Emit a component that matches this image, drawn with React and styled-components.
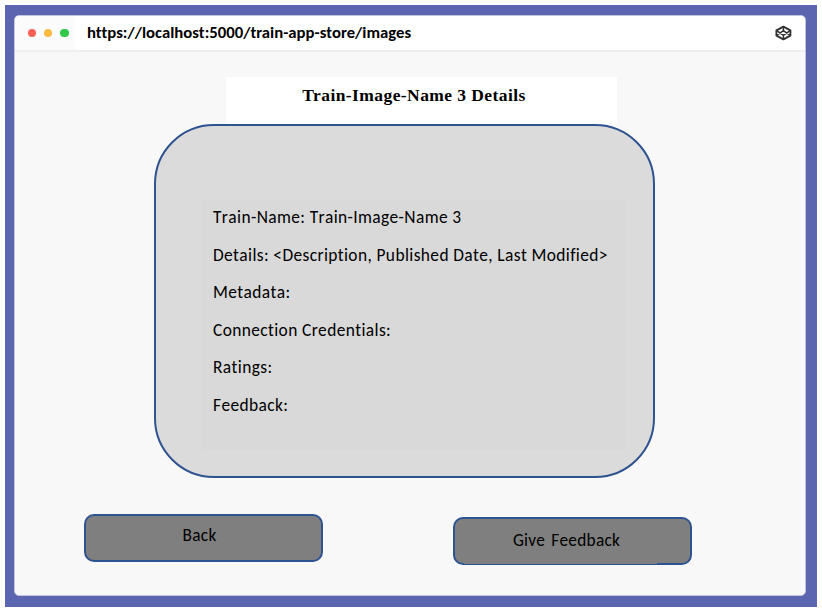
import React from 'react';
import styled, { createGlobalStyle } from 'styled-components';

const uiFont = 'Carlito, Calibri, Lato, sans-serif';

const GlobalStyle = createGlobalStyle`
  *, *::before, *::after { box-sizing: border-box; }
  body { margin: 0; background: #fff; overflow: hidden; }
`;

const Page = styled.div`
  width: 822px;
  height: 610px;
  padding: 5px 5px 3px;
`;

const Backdrop = styled.div`
  width: 812px;
  height: 602px;
  padding: 10px 11px 11px 9px;
  background: #5c65b0;
`;

const Window = styled.div`
  display: flex;
  flex-direction: column;
  width: 792px;
  height: 581px;
  border: 1px solid #c3c5e0;
  border-radius: 5px;
  background: #f8f8f8;
  overflow: hidden;
`;

const TitleBar = styled.header`
  display: flex;
  align-items: center;
  flex: none;
  height: 36px;
  padding-right: 13px;
  border-bottom: 2px solid #eeeeee;
  background: #fff;
`;

const Dots = styled.div`
  display: flex;
  align-items: center;
  align-self: stretch;
  gap: 7.8px;
  width: 60px;
  padding-left: 12.5px;
  background: #fbfbfb;
`;

const Dot = styled.span`
  width: 8.6px;
  height: 8.6px;
  border-radius: 50%;
  background: ${(p) => p.$color};
`;

const Url = styled.span`
  flex: 1;
  padding: 0 0 2px 12px;
  font: bold 16.7px/32px ${uiFont};
  font-variant-ligatures: none;
  letter-spacing: 0.03px;
  color: #000;
`;

const Logo = styled.svg`
  flex: none;
  width: 18px;
  height: 16px;
`;

const Content = styled.main`
  display: flex;
  flex-direction: column;
  padding: 25px 0 0;
`;

const Heading = styled.h1`
  width: 391px;
  height: 47px;
  margin: 0 0 0 211px;
  padding-right: 15px;
  background: #fff;
  font: bold 17.5px/37px "Liberation Serif", "Times New Roman", serif;
  letter-spacing: 0.42px;
  text-align: center;
  color: #000;
`;

const Card = styled.section`
  width: 501px;
  height: 354px;
  margin-left: 139px;
  padding: 74px 0 0 45px;
  border: 2px solid #2f5291;
  border-radius: 60px;
  background: #dbdbdb;
`;

const Fields = styled.div`
  width: 424px;
  height: 250px;
  padding-left: 12px;
  background: #d9d9d9;
`;

const Field = styled.div`
  height: 37.6px;
  font: 17.4px/35.5px ${uiFont};
  font-kerning: none;
  letter-spacing: 0.385px;
  white-space: nowrap;
  color: #000;
`;

const Actions = styled.footer`
  display: flex;
  align-items: flex-start;
  gap: 130px;
  padding: 36px 0 0 69px;
`;

const Button = styled.button`
  width: 239px;
  height: 48px;
  padding: 0 8px 5px 0;
  border: 2px solid #2f5291;
  border-radius: 10px;
  background: #7f7f7f;
  font: 17.3px/20px ${uiFont};
  font-kerning: none;
  letter-spacing: 0.35px;
  color: #000;
`;

const FeedbackButton = styled(Button)`
  position: relative;
  margin-top: 3px;
  padding: 0 12px 1px 0;
  letter-spacing: 0.25px;
  word-spacing: 2px;

  &::after {
    content: '';
    position: absolute;
    left: 9px;
    bottom: -1px;
    width: 193px;
    height: 1px;
    background: #7f7f7f;
  }
`;

const dots = ['#fb5f58', '#fdba40', '#2fc84a'];

const fields = [
  'Train-Name: Train-Image-Name 3',
  'Details: <Description, Published Date, Last Modified>',
  'Metadata:',
  'Connection Credentials:',
  'Ratings:',
  'Feedback:',
];

export default function App() {
  return (
    <Page>
      <GlobalStyle />
      <Backdrop>
        <Window>
          <TitleBar>
            <Dots>
              {dots.map((color) => (
                <Dot key={color} $color={color} />
              ))}
            </Dots>
            <Url>https://localhost:5000/train-app-store/images</Url>
            <Logo viewBox="0 0 18 16" fill="none" stroke="#333" strokeWidth="1.9" strokeLinejoin="round">
              <path d="M9.4 1.6 16.4 5.4v5.2l-7 3.8-7-3.8V5.4Z" />
              <path
                d="M9.4 1.5v4.2M9.4 10.3v4.2M2.4 5.4l7 4.9 7-4.9M2.4 10.6l7-4.9 7 4.9"
                strokeWidth="1.5"
              />
            </Logo>
          </TitleBar>
          <Content>
            <Heading>Train-Image-Name 3 Details</Heading>
            <Card>
              <Fields>
                {fields.map((text) => (
                  <Field key={text}>{text}</Field>
                ))}
              </Fields>
            </Card>
            <Actions>
              <Button type="button">Back</Button>
              <FeedbackButton type="button">Give Feedback</FeedbackButton>
            </Actions>
          </Content>
        </Window>
      </Backdrop>
    </Page>
  );
}
